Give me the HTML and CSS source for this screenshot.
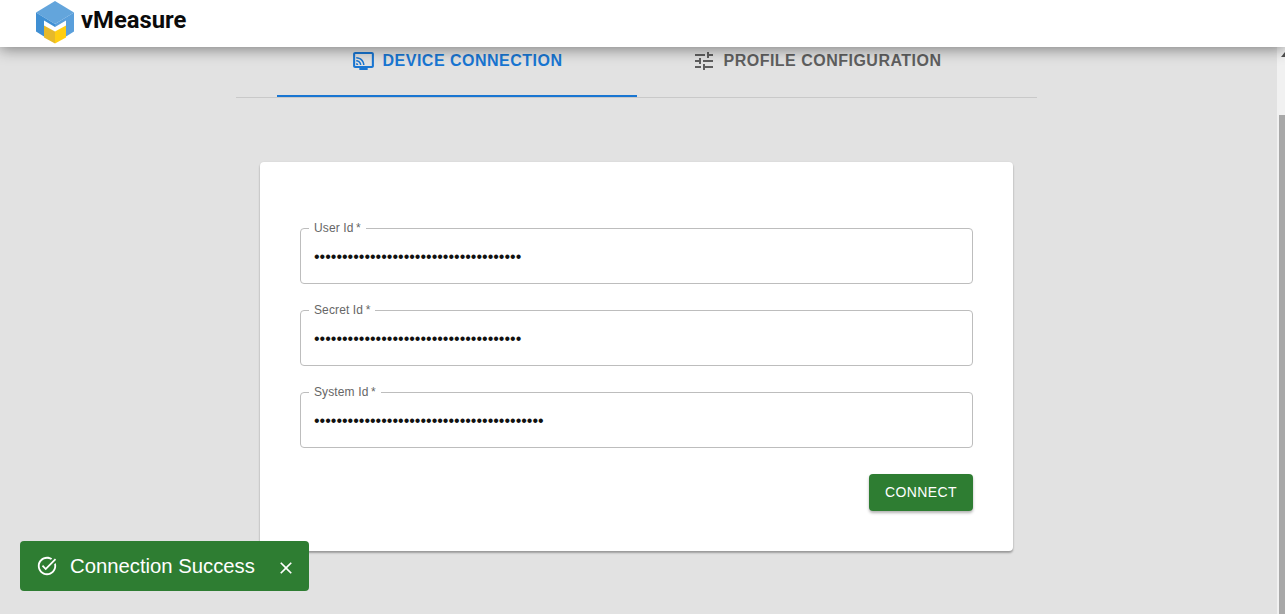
FILE: index.html
```html
<!DOCTYPE html>
<html lang="en">
<head>
<meta charset="utf-8">
<title>vMeasure</title>
<link rel="stylesheet" href="styles.css">
</head>
<body>
<div class="app">
  <header class="appbar">
    <svg class="logo" viewBox="0 0 40 44" width="40" height="44" aria-label="vMeasure logo">
      <path fill="#63a5dc" d="M20 1 39 12.500 20 24 1 12.500z"/>
      <path fill="#3f8fd3" d="M1 12.500 20 24 20 27 9 20.500 9 36.500 1 31.500z"/>
      <path fill="#5a9fdb" d="M39 12.500 20 24 20 27 31 20.500 31 36.500 39 31.500z"/>
      <path fill="#e6b92b" d="M9 25.500 20 31.500 20 43.500 9 37.500z"/>
      <path fill="#ffce12" d="M31 25.500 20 31.500 20 43.500 31 37.500z"/>
    </svg>
    <span class="brand">vMeasure</span>
  </header>
  <div class="viewport">
    <main class="content">
      <nav class="tabs">
        <div class="tab tab-active">
          <svg class="tab-icon tab-icon-wide" viewBox="0 0 24 24" preserveAspectRatio="none"><path d="M20 3H4c-1.100 0-2 .89-2 2v12c0 1.100.9 2 2 2h4v2h8v-2h4c1.100 0 2-.9 2-2V5c0-1.110-.9-2-2-2zm0 14H4V5h16v12zM5 14v2h2c0-1.110-.89-2-2-2zm0-3v1.430c1.970 0 3.570 1.600 3.570 3.570H10c0-2.760-2.240-5-5-5zm0-3v1.450c3.610 0 6.550 2.930 6.550 6.550H13c0-4.420-3.590-8-8-8z"/></svg>
          <span>DEVICE CONNECTION</span>
        </div>
        <div class="tab">
          <svg class="tab-icon" viewBox="0 0 24 24"><path d="M3 17v2h6v-2H3zM3 5v2h10V5H3zm10 16v-2h8v-2h-8v-2h-2v6h2zM7 9v2H3v2h4v2h2V9H7zm14 4v-2H11v2h10zm-6-4h2V7h4V5h-4V3h-2v6z"/></svg>
          <span>PROFILE CONFIGURATION</span>
        </div>
      </nav>
      <form class="card">
        <fieldset class="field">
          <legend>User Id&thinsp;*</legend>
          <input type="password" value="1234567890123456789012345678901234567" aria-label="User Id">
        </fieldset>
        <fieldset class="field">
          <legend>Secret Id&thinsp;*</legend>
          <input type="password" value="1234567890123456789012345678901234567" aria-label="Secret Id">
        </fieldset>
        <fieldset class="field">
          <legend>System Id&thinsp;*</legend>
          <input type="password" value="12345678901234567890123456789012345678901" aria-label="System Id">
        </fieldset>
        <div class="actions">
          <button type="button" class="connect">CONNECT</button>
        </div>
      </form>
    </main>
    <div class="scrollbar">
      <div class="scroll-arrow"></div>
      <div class="scroll-thumb"></div>
    </div>
  </div>
  <div class="snackbar">
    <svg class="snack-icon" viewBox="0 0 24 24"><path d="M22 5.180 10.590 16.600l-4.240-4.240 1.410-1.410 2.830 2.830 10-10L22 5.180zm-2.210 5.040c.13.57.21 1.170.21 1.780 0 4.420-3.580 8-8 8s-8-3.580-8-8 3.580-8 8-8c1.580 0 3.040.46 4.280 1.250l1.440-1.440C16.100 2.670 14.130 2 12 2 6.480 2 2 6.480 2 12s4.480 10 10 10 10-4.480 10-10c0-1.190-.22-2.330-.6-3.390l-1.610 1.610z"/></svg>
    <span class="snack-text">Connection Success</span>
    <svg class="snack-close" viewBox="0 0 24 24"><path d="M19 6.410 17.590 5 12 10.590 6.410 5 5 6.410 10.590 12 5 17.590 6.410 19 12 13.410 17.590 19 19 17.590 13.410 12z"/></svg>
  </div>
</div>
</body>
</html>
```
FILE: styles.css
```css
* { box-sizing: border-box; }
html, body { margin: 0; height: 100%; overflow: hidden; }
body { font-family: "Liberation Sans", Arial, sans-serif; background: #e2e2e2; }

.app { position: relative; height: 614px; display: flex; flex-direction: column; }

.appbar {
  position: relative;
  z-index: 2;
  flex: 0 0 47px;
  display: flex;
  align-items: flex-start;
  padding-left: 35px;
  background: #fff;
  box-shadow: 0 2px 14px rgba(0, 0, 0, .45);
}
.logo { display: block; margin-top: 0; }
.brand {
  margin-left: 6px;
  font-family: Roboto, sans-serif;
  font-weight: 700;
  font-size: 23.8px;
  line-height: 40px;
  color: #0b0b0b;
}

.viewport { flex: 1; display: flex; min-height: 0; }
.content { flex: 1; padding-right: 4px; display: flex; flex-direction: column; align-items: center; }

.tabs {
  width: 801px;
  height: 51px;
  display: flex;
  justify-content: center;
  border-bottom: 1px solid #c9c9c9;
}
.tab {
  width: 360px;
  height: 50px;
  padding-top: 2px;
  display: flex;
  justify-content: center;
  align-items: flex-start;
  gap: 8px;
  font-weight: 700;
  font-size: 16px;
  line-height: 24px;
  letter-spacing: .49px;
  color: #5f5f5f;
}
.tab-active { color: #1976d2; border-bottom: 2px solid #1976d2; }
.tab-icon { width: 24px; height: 24px; fill: currentColor; display: block; }
.tab-icon-wide { width: 25px; margin: 0 -1px 0 0; }

.card {
  width: 753px;
  height: 389px;
  margin-top: 64px;
  padding: 59px 40px 40px;
  background: #fff;
  border-radius: 4px;
  box-shadow: 0 2px 2px rgba(0, 0, 0, .3), 0 0 2px rgba(0, 0, 0, .08);
  display: flex;
  flex-direction: column;
}
.field {
  margin: 0 0 19px;
  padding: 0;
  min-width: 0;
  height: 63px;
  border: 1px solid #bdbdbd;
  border-radius: 4px;
}
.field legend {
  margin-left: 8px;
  padding: 0 5px;
  font-size: 12px;
  line-height: 14px;
  letter-spacing: .12px;
  color: #666;
}
.field input {
  display: block;
  width: 100%;
  height: 44px;
  padding: 0 13px;
  border: 0;
  outline: 0;
  background: transparent;
  font-family: "Liberation Sans", Arial, sans-serif;
  font-size: 16px;
  color: #111;
}

.actions { display: flex; justify-content: flex-end; margin-top: 7px; }
.connect {
  width: 104px;
  height: 37px;
  padding: 0 0 2px;
  border: 0;
  border-radius: 4px;
  background: #2e7d32;
  color: #fff;
  font-family: "Liberation Sans", Arial, sans-serif;
  font-size: 14px;
  letter-spacing: .4px;
  box-shadow: 0 2px 3px rgba(0, 0, 0, .3);
}

.scrollbar { flex: 0 0 8px; background: #f1f1f1; display: flex; flex-direction: column; align-items: flex-end; }
.scroll-arrow {
  width: 0;
  height: 0;
  margin-top: 5px;
  border-left: 4px solid transparent;
  border-bottom: 5px solid #505050;
}
.scroll-thumb { width: 6px; margin-top: 58px; flex: 1; background: #a8a8a8; }

.snackbar {
  position: absolute;
  left: 20px;
  top: 541px;
  width: 289px;
  height: 50px;
  display: flex;
  align-items: center;
  padding-left: 16px;
  background: #2e7d32;
  border-radius: 4px;
  color: #fff;
}
.snack-icon { width: 22px; height: 22px; fill: #fff; flex: none; }
.snack-text { margin-left: 12px; font-size: 20.3px; }
.snack-close { width: 20px; height: 20px; fill: #fff; flex: none; margin: 4px 0 0 21px; }
```
